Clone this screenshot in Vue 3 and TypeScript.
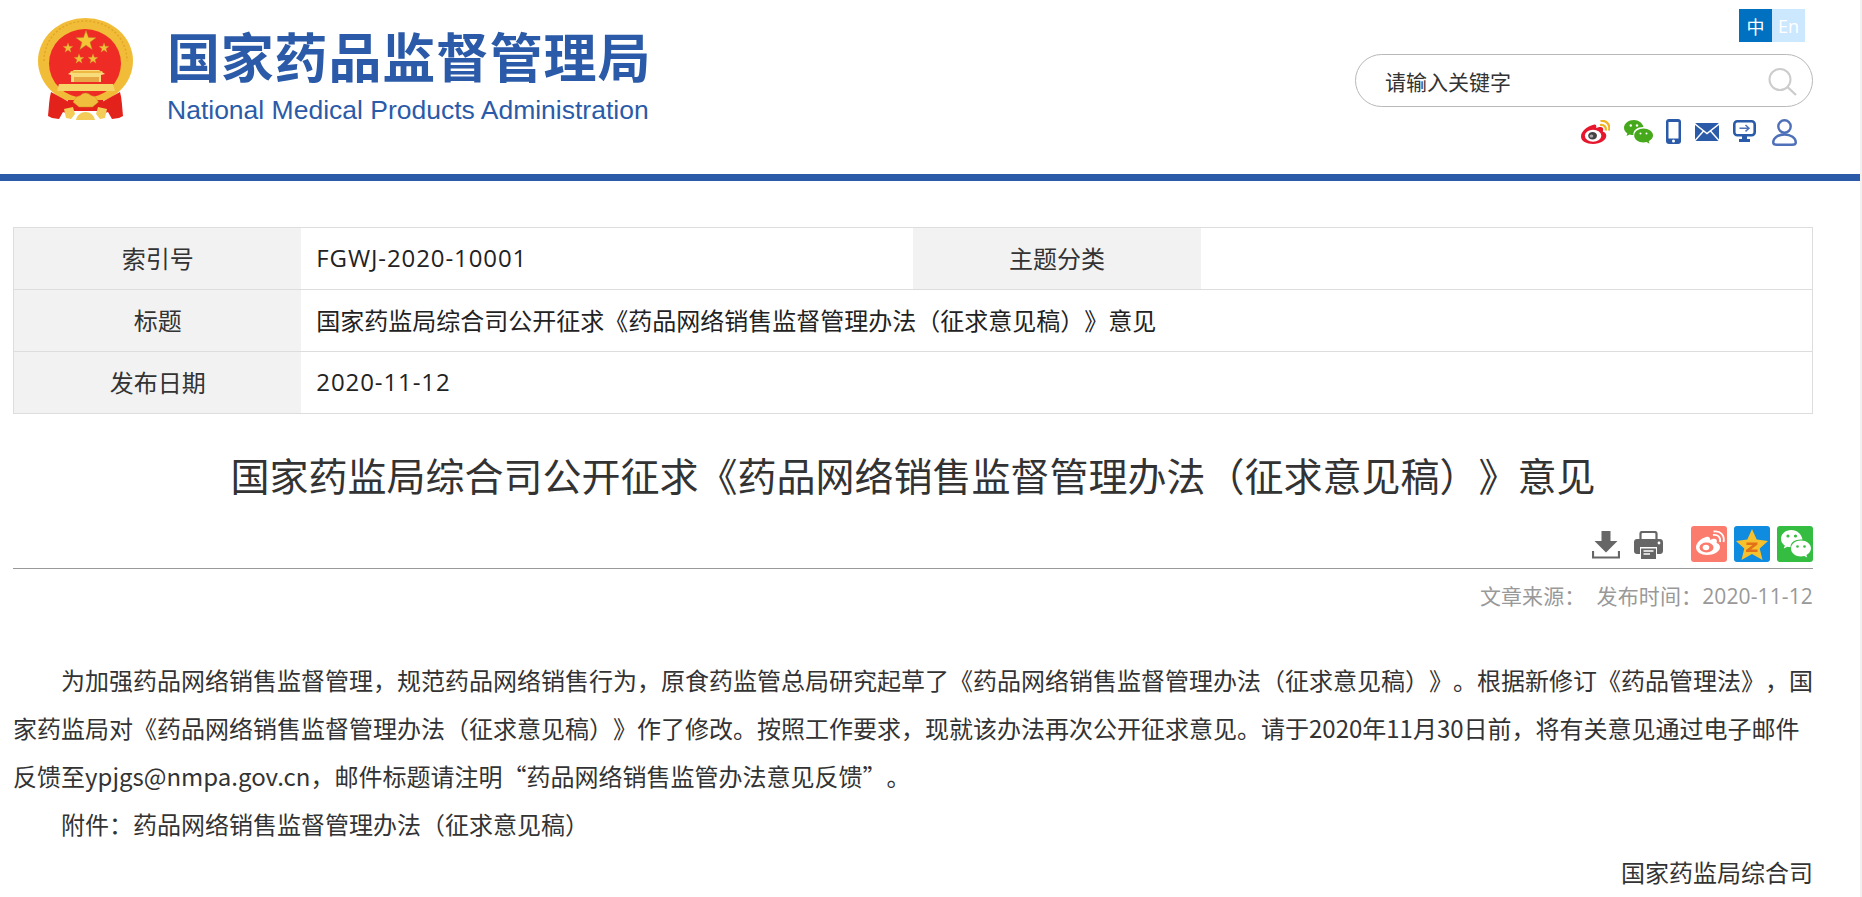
<script setup lang="ts">
interface InfoRow {
  label: string
  value: string
  label2?: string
  value2?: string
  latin?: boolean
}

const infoRows: InfoRow[] = [
  { label: '索引号', value: 'FGWJ-2020-10001', label2: '主题分类', value2: '', latin: true },
  { label: '标题', value: '国家药监局综合司公开征求《药品网络销售监督管理办法（征求意见稿）》意见' },
  { label: '发布日期', value: '2020-11-12', latin: true },
]

// five pointed star for the emblem
function star(cx: number, cy: number, r: number): string {
  const pts: string[] = []
  for (let i = 0; i < 10; i++) {
    const rad = i % 2 === 0 ? r : r * 0.4
    const a = -Math.PI / 2 + (i * Math.PI) / 5
    pts.push(`${(cx + rad * Math.cos(a)).toFixed(2)},${(cy + rad * Math.sin(a)).toFixed(2)}`)
  }
  return pts.join(' ')
}

const smallStars: [number, number][] = [
  [30, 30],
  [66, 30],
  [41, 41],
  [55, 41],
]
</script>

<template>
  <div class="page">
    <header class="header">
      <div class="brand">
        <svg class="emblem" viewBox="0 0 95 103" aria-hidden="true">
          <ellipse cx="47.500" cy="43" rx="47.500" ry="43" fill="#f1bd38" />
          <path d="M6 43C6 20 24 3 47.500 3S89 20 89 43" fill="none" stroke="#e2a526" stroke-width="1.500" stroke-dasharray="2 2" />
          <ellipse cx="47" cy="45.500" rx="36" ry="34.500" fill="#ee2b24" />
          <polygon :points="star(48, 23, 10.500)" fill="#f4c535" stroke="#b98a2a" stroke-width=".5" />
          <polygon v-for="s in smallStars" :key="s[0]" :points="star(s[0], s[1], 5.200)" fill="#f0bf3a" stroke="#c79a30" stroke-width=".3" />
          <path d="M30 56l6-4h25l6 4-4 1v7H33v-7z" fill="#f8dc7c" />
          <path d="M32 53h33l-3 2H35z" fill="#efb946" />
          <path d="M36 59h25v5H36z" fill="#e8a745" />
          <path d="M21 66h54l2 7H19z" fill="#f6d568" />
          <path d="M30 82h35v11H30z" fill="#e3221b" />
          <path d="M13 74L31 84l5 7-5 5-6-2-4 7-7-1-4-2c1-9 1-17 3-24z" fill="#e3221b" />
          <path d="M82 74L64 84l-5 7 5 5 6-2 4 7 7-1 4-2c-1-9-1-17-3-24z" fill="#e3221b" />
          <path d="M47.500 75c4 0 5 3 7 3 3 0 4 3 6 6l-6 5H41l-6-5c2-3 3-6 6-6 2 0 2.500-3 6.500-3z" fill="#f0bd3c" stroke="#c98f22" stroke-width=".5" />
          <path d="M26 91l9-2 2 7-4 5-5-1zM69 91l-9-2-2 7 4 5 5-1zM38 102c1-5 5-8 9.500-8s8.500 3 9.500 8z" fill="#f3cd57" />
        </svg>
        <div class="brand-text">
          <div class="brand-cn">国家药品监督管理局</div>
          <div class="brand-en">National Medical Products Administration</div>
        </div>
      </div>
      <div class="tools">
        <div class="lang">
          <span class="lang-item lang-on">中</span>
          <span class="lang-item lang-off">En</span>
        </div>
        <div class="search">
          <span class="search-hint">请输入关键字</span>
          <svg class="search-icon" viewBox="0 0 29 28" aria-hidden="true">
            <circle cx="12" cy="11.500" r="10.500" fill="none" stroke="#ccc" stroke-width="2" />
            <path d="M19.500 19l8.500 8" fill="none" stroke="#ccc" stroke-width="2.400" />
          </svg>
        </div>
        <div class="links">
          <svg class="ic-weibo" viewBox="0 0 29 24" aria-hidden="true">
            <g transform="translate(0 -2.400) scale(1.100)">
              <path d="M11.500 6.500C5.500 8 0 12.500 0 17.200 0 21.500 5 24 11 24c6.500 0 12-3.500 12-7.500 0-2.500-2-3.300-3.200-3.800.8-2 .4-3.500-1-4-2-.6-4 .4-5 .8.500-2-.2-3.600-2.300-3z" fill="#e6162d" />
              <ellipse cx="11" cy="16.500" rx="7.500" ry="5.500" fill="#fff" />
              <ellipse cx="10.500" cy="16.500" rx="4" ry="3.500" fill="#444" />
              <ellipse cx="9.500" cy="16.800" rx="1.700" ry="1.400" fill="#aaa" />
            </g>
            <path d="M19 5c4-.8 6.500 2 5.700 5.500M19.500 1c6-1.200 10 3.800 8.500 9.500" fill="none" stroke="#f0b323" stroke-width="2.200" />
          </svg>
          <svg class="ic-wechat" viewBox="0 0 29 24" aria-hidden="true">
            <path d="M10 0C4.500 0 0 3.500 0 7.800c0 2.400 1.300 4.300 3.400 5.700L2.500 16l3.200-1.500c1.200.3 2.500.6 3.700.6C9 10 13 7 19.500 7 18.500 3 14.500 0 10 0z" fill="#46a81b" />
            <path d="M19.500 8.500c-5 0-9.300 3-9.300 7s4.300 7 9.300 7c1 0 2-.1 3-.4l3 1.600-.8-2.400c2.500-1.400 4.300-3.600 4.300-5.800 0-4-4.500-7-9.500-7z" fill="#46a81b" />
            <circle cx="6.800" cy="5.500" r="1.200" fill="#fff" />
            <circle cx="13" cy="5.500" r="1.200" fill="#fff" />
            <circle cx="16.500" cy="13.500" r="1" fill="#fff" />
            <circle cx="22.500" cy="13.500" r="1" fill="#fff" />
          </svg>
          <svg class="ic-phone" viewBox="0 0 15 25" aria-hidden="true">
            <rect x="0" y="0" width="15" height="25" rx="3" fill="#2b5ba8" />
            <rect x="2.500" y="3" width="10" height="16.500" fill="#fff" />
            <circle cx="7.500" cy="22" r="1.500" fill="#fff" />
          </svg>
          <svg class="ic-mail" viewBox="0 0 24 18" aria-hidden="true">
            <rect width="24" height="18" rx="1.500" fill="#2b5ba8" />
            <path d="M0 1l12 9.500L24 1M0 17.500l8.500-9.500M24 17.500L15.500 8" fill="none" stroke="#fff" stroke-width="1.500" />
          </svg>
          <svg class="ic-screen" viewBox="0 0 23 22" aria-hidden="true">
            <rect x="1.300" y="1.300" width="20.400" height="14" rx="3" fill="none" stroke="#2b5ba8" stroke-width="2.600" />
            <path d="M9 16h5v3H9zM6 19h11v3H6z" fill="#2b5ba8" />
            <path d="M6.500 8.200h9.500M12.500 5l3.500 3.200-3.500 3.200" fill="none" stroke="#4e70b8" stroke-width="1.500" />
          </svg>
          <svg class="ic-user" viewBox="0 0 25 27" aria-hidden="true">
            <circle cx="12.500" cy="7.500" r="6.200" fill="none" stroke="#4e70b8" stroke-width="2.400" />
            <path d="M5 25.800h15c3 0 3.800-1 3.800-2.300 0-4.500-5-8-11.300-8S1.200 19 1.200 23.500C1.200 24.800 2 25.800 5 25.800z" fill="none" stroke="#4e70b8" stroke-width="2.400" />
          </svg>
        </div>
      </div>
    </header>
    <div class="bar"></div>

    <main class="content">
      <table class="info">
        <tbody>
          <tr v-for="row in infoRows" :key="row.label">
            <th class="cell-label">{{ row.label }}</th>
            <td v-if="row.label2" class="cell-value" :class="{ latin: row.latin }">{{ row.value }}</td>
            <th v-if="row.label2" class="cell-label">{{ row.label2 }}</th>
            <td v-if="row.label2" class="cell-value">{{ row.value2 }}</td>
            <td v-else class="cell-value" :class="{ latin: row.latin }" colspan="3">{{ row.value }}</td>
          </tr>
        </tbody>
      </table>

      <h1 class="title">国家药监局综合司公开征求《药品网络销售监督管理办法（征求意见稿）》意见</h1>

      <div class="share">
        <svg class="ic-download" viewBox="0 0 28 28" aria-hidden="true">
          <path d="M9.500 0h9v10h7L14 21.500 2.500 10h7z" fill="#666" />
          <path d="M1 20v6.500h26V20" fill="none" stroke="#666" stroke-width="2.200" />
        </svg>
        <svg class="ic-print" viewBox="0 0 29 28" aria-hidden="true">
          <path d="M6.500 8V2.500C6.500 1.500 7.500 1 8.500 1h12c1 0 2 .5 2 1.500V8" fill="none" stroke="#666" stroke-width="2.200" />
          <path d="M3 8h23c1.700 0 3 1.300 3 3v9c0 1.700-1.300 3-3 3h-3v-7H6v7H3c-1.700 0-3-1.300-3-3v-9c0-1.700 1.300-3 3-3z" fill="#666" />
          <path d="M7 17.500h15V28H7z" fill="#666" />
          <path d="M9.500 20h10M9.500 23h6.500" stroke="#fff" stroke-width="1.400" />
          <circle cx="25" cy="12" r="1.400" fill="#fff" />
        </svg>
        <span class="share-gap"></span>
        <div class="share-box box-weibo">
          <svg viewBox="0 0 36 36" aria-hidden="true">
            <path d="M15 11c-5 1.500-10 5.500-10 10.500C5 26 10 29 16 29c7 0 13-3.500 13-8 0-2.500-2-3.500-3.500-4 .8-2 .4-3.500-1-4-2-.5-4.500.5-5.500 1 .5-2.500-1-4-4-3z" fill="#fff" />
            <ellipse cx="15.500" cy="21.500" rx="7" ry="5" fill="#fb7b6c" />
            <ellipse cx="15" cy="21.500" rx="3.300" ry="2.800" fill="#fff" />
            <path d="M22 9c4.500-1 8 2.500 7 7M22.500 5.500c7-1.300 11.500 4 10 10.500" fill="none" stroke="#fff" stroke-width="1.800" />
          </svg>
        </div>
        <div class="share-box box-qzone">
          <svg viewBox="0 0 36 36" aria-hidden="true">
            <path d="M18 3l4.700 10.500L34 15l-8.300 7.400L28.500 34 18 28 7.500 34l2.800-11.600L2 15l11.300-1.500z" fill="#f6c12d" />
            <path d="M12.500 16.500h11v2l-6.500 5h6.500v2.500h-11.500v-2l6.500-5h-6z" fill="#e2711a" />
          </svg>
        </div>
        <div class="share-box box-wechat">
          <svg viewBox="0 0 36 36" aria-hidden="true">
            <path d="M14.500 4C8 4 4 8 4 13c0 2.800 1.500 5 3.800 6.500l-1 3 3.500-1.800c1 .3 2.300.5 3.200.5C13.500 16 18 13 25.500 13.500 24.500 8 20 4 14.500 4z" fill="#fff" />
            <path d="M24 14.500c-5.500 0-10 3.500-10 8s4.500 8 10 8c1.200 0 2.200-.2 3.200-.5l3 1.500-.8-2.500C32 27.500 34 25 34 22.500c0-4.500-4.500-8-10-8z" fill="#fff" />
            <circle cx="11" cy="10" r="1.600" fill="#35bd42" />
            <circle cx="18.500" cy="10" r="1.600" fill="#35bd42" />
            <circle cx="20.500" cy="20.500" r="1.300" fill="#35bd42" />
            <circle cx="27.500" cy="20.500" r="1.300" fill="#35bd42" />
          </svg>
        </div>
      </div>

      <div class="meta">文章来源：&nbsp;&nbsp;发布时间：2020-11-12</div>

      <article class="article">
        <p class="para">为加强药品网络销售监督管理，规范药品网络销售行为，原食药监管总局研究起草了《药品网络销售监督管理办法（征求意见稿）》。根据新修订《药品管理法》，国家药监局对《药品网络销售监督管理办法（征求意见稿）》作了修改。按照工作要求，现就该办法再次公开征求意见。请于2020年11月30日前，将有关意见通过电子邮件反馈至ypjgs@nmpa.gov.cn，邮件标题请注明“药品网络销售监管办法意见反馈”。</p>
        <p class="para">附件：药品网络销售监督管理办法（征求意见稿）</p>
        <p class="sign">国家药监局综合司</p>
      </article>
    </main>
  </div>
</template>

<style>
body {
  background: #f1f1f1;
}
</style>

<style scoped>
.page {
  width: 1860px;
  height: 897px;
  overflow: hidden;
  background: #fff;
  font-family: "Open Sans", "Noto Sans CJK SC", sans-serif;
  color: #333;
  text-spacing-trim: space-all;
}

.header {
  height: 174px;
  display: flex;
  justify-content: space-between;
  box-sizing: border-box;
  padding: 9px 47px 0 38px;
}

.brand {
  display: flex;
  align-items: flex-start;
  padding-top: 9px;
  gap: 34px;
}

.emblem {
  width: 95px;
  height: 103px;
}

.brand-text {
  display: flex;
  flex-direction: column;
  padding-top: 4px;
}

.brand-cn {
  font-family: "Noto Sans CJK SC", sans-serif;
  font-size: 53px;
  letter-spacing: .8px;
  line-height: 66px;
  font-weight: 700;
  color: #2b5ba8;
  white-space: nowrap;
}

.brand-en {
  font-family: "Liberation Sans", sans-serif;
  font-size: 26.500px;
  line-height: 28px;
  color: #2b5ba8;
  white-space: nowrap;
  margin-top: 8px;
}

.tools {
  width: 458px;
  display: flex;
  flex-direction: column;
  align-items: flex-end;
}

.lang {
  display: flex;
  margin-right: 8px;
}

.lang-item {
  width: 33px;
  height: 33px;
  display: flex;
  align-items: center;
  justify-content: center;
  font-size: 18px;
  color: #fff;
}

.lang-on {
  background: #0070c0;
}

.lang-off {
  background: #cce8ff;
}

.search {
  width: 458px;
  height: 53px;
  box-sizing: border-box;
  border: 1px solid #b8b8b8;
  border-radius: 27px;
  margin-top: 12px;
  padding: 0 15px 0 29px;
  display: flex;
  align-items: center;
  justify-content: space-between;
}

.search-hint {
  font-size: 21px;
  color: #333;
}

.search-icon {
  width: 29px;
  height: 28px;
  margin-top: 2px;
}

.links {
  width: 100%;
  display: flex;
  align-items: flex-start;
  padding-top: 12px;
  padding-left: 226px;
  box-sizing: border-box;
}

.ic-weibo { width: 29px; height: 24px; margin-top: 1px; }
.ic-wechat { width: 29px; height: 24px; margin: 1px 0 0 14px; }
.ic-phone { width: 15px; height: 25px; margin-left: 13px; }
.ic-mail { width: 24px; height: 18px; margin: 4px 0 0 14px; }
.ic-screen { width: 23px; height: 22px; margin: 1px 0 0 14px; }
.ic-user { width: 25px; height: 27px; margin-left: 16px; }

.bar {
  height: 7px;
  background: #2b5ba8;
}

.content {
  width: 1800px;
  margin-left: 13px;
  padding-top: 46px;
}

.info {
  width: 100%;
  height: 186px;
  table-layout: fixed;
  border-collapse: collapse;
  border: 1px solid #ddd;
}

.info tr {
  height: 62px;
  border-top: 1px solid #ddd;
}

.cell-label {
  box-sizing: border-box;
  width: 16%;
  background: #f2f2f2;
  font-weight: 400;
  font-size: 24px;
  color: #333;
  text-align: center;
  padding: 0 0 2px;
}

.cell-value {
  box-sizing: border-box;
  width: 34%;
  font-size: 24px;
  color: #222;
  padding: 0 15px 2px;
}

.latin {
  letter-spacing: .9px;
}

.title {
  margin: 30px 0 0;
  font-size: 39px;
  line-height: 64px;
  font-weight: 400;
  text-align: center;
  color: #333;
}

.share {
  display: flex;
  align-items: flex-start;
  justify-content: flex-end;
  height: 42px;
  border-bottom: 1px solid #999;
  padding-top: 1px;
  margin-top: 17px;
}

.ic-download { width: 28px; height: 28px; margin-top: 5px; }
.ic-print { width: 29px; height: 28px; margin: 5px 0 0 14px; }
.share-gap { width: 28px; }

.share-box {
  width: 36px;
  height: 36px;
  margin-left: 7px;
  border-radius: 3px;
}

.share-box:first-of-type {
  margin-left: 0;
}

.share-box svg {
  display: block;
  width: 36px;
  height: 36px;
}

.box-weibo { background: #fb7b6c; }
.box-qzone { background: #0f8be0; }
.box-wechat { background: #35bd42; }

.meta {
  margin-top: 12px;
  font-size: 21px;
  letter-spacing: .12px;
  line-height: 30px;
  color: #999;
  text-align: right;
}

.article {
  margin-top: 45px;
  font-family: "Noto Sans CJK SC", sans-serif;
  font-size: 24px;
  line-height: 48px;
  color: #333;
}

.para {
  margin: 0;
  text-indent: 2em;
}

.sign {
  margin: 0;
  text-align: right;
}
</style>
